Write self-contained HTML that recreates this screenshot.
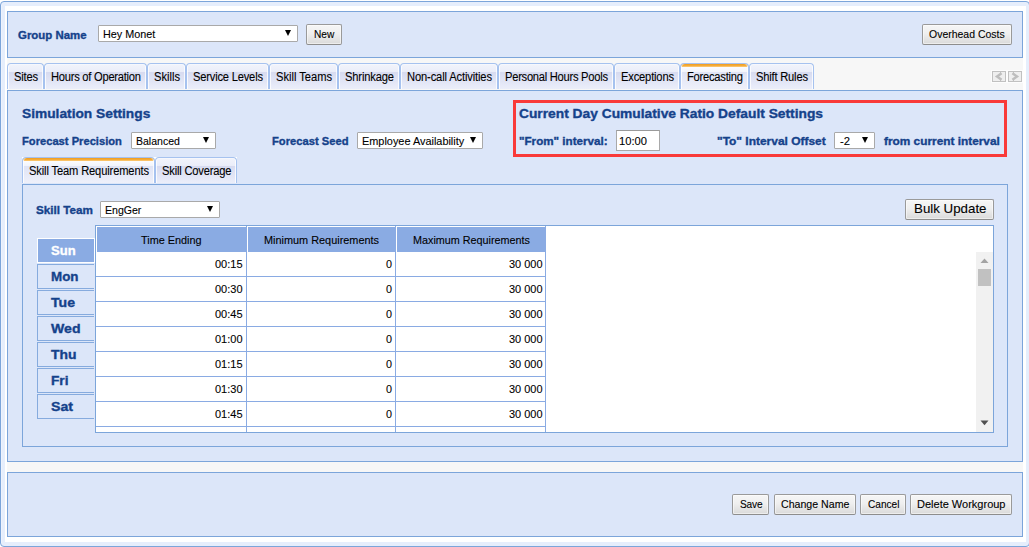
<!DOCTYPE html>
<html lang="en"><head><meta charset="utf-8"><title>Workgroup</title>
<style>
html,body{margin:0;padding:0;background:#fff;}
body{width:1029px;height:547px;overflow:hidden;position:relative;font-family:"Liberation Sans", sans-serif;}
div,span{box-sizing:border-box;}
.a{position:absolute;}
.t{position:absolute;white-space:nowrap;line-height:20px;}
.pnl{position:absolute;border:1px solid #7ca5da;background:#dce6f9;}
.btn{position:absolute;border:1px solid #9a9a9a;border-bottom-color:#8d8d8d;border-radius:2px;background:linear-gradient(#f6f6f6,#efefef 45%,#dadada);box-shadow:inset 0 0 0 1px rgba(255,255,255,.5);}
.sel{position:absolute;border:1px solid #a9a9a9;background:#fff;border-radius:1px;}
.arr{position:absolute;width:0;height:0;border-left:3.5px solid transparent;border-right:3.5px solid transparent;border-top:6px solid #000;}
.tab{position:absolute;height:26px;border:1px solid #a6c2ef;border-bottom:none;border-radius:4px 4px 0 0;
 background:linear-gradient(#fbfcff 0,#f1f3fb 1px,#eaedf9 8px,#d7dbf0 8.5px,#ebeefa 100%);box-shadow:inset 1px 0 0 rgba(255,255,255,.8),inset -1px 0 0 rgba(255,255,255,.8);}
.tab.on{background:linear-gradient(#f1a127 0,#f1a127 1px,#f8b546 2px,#fccf86 3px,#fafbfe 3.5px,#f2f4fb 8px,#e0e4f5 8.5px,#eef0fa 100%);}
.day{position:absolute;left:37px;width:57px;height:25px;border:1px solid #86abde;border-right:none;background:#dce6f9;}
.day.on{background:#8aabe3;border:1px solid #fff;width:58px;}
.hl{position:absolute;height:1px;background:#8aabe3;}
.vl{position:absolute;width:1px;background:#8aabe3;}
</style></head><body>

<div class="a" style="left:0;top:1px;width:1030px;height:546px;border:1px solid #7ca5da;border-radius:4px;background:#e6eefc;box-shadow:inset 1px 0 0 #eef3fd;"></div>
<div class="a" style="left:5px;top:6px;width:1021px;height:536px;background:#fff;"></div>
<div class="a" style="left:7px;top:58px;width:1016px;height:414px;background:#f7f7f7;"></div>
<div class="pnl" style="left:7px;top:11px;width:1016px;height:47px;"></div>
<div class="pnl" style="left:7px;top:90px;width:1016px;height:372px;"></div>
<div class="pnl" style="left:7px;top:472px;width:1016px;height:65px;"></div>
<div class="pnl" style="left:22px;top:184px;width:986px;height:263px;"></div>
<div class="sel" style="left:98px;top:25px;width:200px;height:17px;"></div><div class="arr" style="left:285px;top:30px;"></div>
<div class="btn" style="left:306px;top:24px;width:36px;height:21px;"></div>
<div class="btn" style="left:922px;top:24px;width:90px;height:21px;"></div>
<div class="tab" style="left:7px;width:37px;top:63px;"></div>
<div class="tab" style="left:44px;width:103px;top:63px;"></div>
<div class="tab" style="left:147px;width:39px;top:63px;"></div>
<div class="tab" style="left:186px;width:83px;top:63px;"></div>
<div class="tab" style="left:269px;width:69px;top:63px;"></div>
<div class="tab" style="left:338px;width:62px;top:63px;"></div>
<div class="tab" style="left:400px;width:98px;top:63px;"></div>
<div class="tab" style="left:498px;width:116px;top:63px;"></div>
<div class="tab" style="left:614px;width:66px;top:63px;"></div>
<div class="tab on" style="left:680px;width:69px;top:63px;"></div>
<div class="tab" style="left:749px;width:65px;top:63px;"></div>
<svg class="a" style="left:991px;top:70px;" width="16" height="13" viewBox="0 0 16 13"><rect x="0" y="0" width="16" height="13" fill="#fdfdfd"/><rect x="1.5" y="1.5" width="13" height="10" fill="#efefef" stroke="#c1c1c1"/><polyline points="10.6,3.3 6.0,6.5 10.6,9.7" fill="none" stroke="#bebebe" stroke-width="2.4"/><rect x="9" y="2" width="1" height="1.6" fill="#c1c1c1"/><rect x="9" y="9.4" width="1" height="1.6" fill="#c1c1c1"/></svg>
<svg class="a" style="left:1007px;top:70px;" width="16" height="13" viewBox="0 0 16 13"><rect x="0" y="0" width="16" height="13" fill="#fdfdfd"/><rect x="1.5" y="1.5" width="13" height="10" fill="#efefef" stroke="#c1c1c1"/><polyline points="5.4,3.3 10.0,6.5 5.4,9.7" fill="none" stroke="#bebebe" stroke-width="2.4"/><rect x="6" y="2" width="1" height="1.6" fill="#c1c1c1"/><rect x="6" y="9.4" width="1" height="1.6" fill="#c1c1c1"/></svg>
<div class="sel" style="left:131px;top:132px;width:85px;height:17px;"></div><div class="arr" style="left:203px;top:137px;"></div>
<div class="sel" style="left:357px;top:132px;width:126px;height:17px;"></div><div class="arr" style="left:470px;top:137px;"></div>
<div class="a" style="left:513px;top:100px;width:494px;height:57px;border:3px solid #f93a3a;"></div>
<div class="a" style="left:616px;top:130px;width:44px;height:21px;border:1px solid #a9a9a9;border-top-color:#9a9a9a;background:#fff;"></div>
<div class="sel" style="left:834px;top:132px;width:41px;height:17px;"></div><div class="arr" style="left:862px;top:137px;"></div>
<div class="a" style="left:22px;top:157px;width:215px;height:4px;background:#fff;"></div>
<div class="a" style="left:25px;top:157px;width:209px;height:4px;background:#dce6f9;"></div>
<div class="a" style="left:151px;top:157px;width:8px;height:4px;background:#fff;"></div>
<div class="tab on" style="left:22px;width:133px;top:157px;"></div>
<div class="tab" style="left:155px;width:82px;top:157px;"></div>
<div class="sel" style="left:100px;top:201px;width:120px;height:17px;"></div><div class="arr" style="left:207px;top:206px;"></div>
<div class="btn" style="left:905px;top:199px;width:89px;height:21px;"></div>
<div class="a" style="left:95px;top:225px;width:899px;height:208px;border:1px solid #7ca5da;background:#fff;"></div>
<div class="a" style="left:97px;top:227px;width:149px;height:25px;background:#8aabe3;"></div>
<div class="vl" style="left:246px;top:226px;height:206px;"></div>
<div class="a" style="left:248px;top:227px;width:147px;height:25px;background:#8aabe3;"></div>
<div class="vl" style="left:395px;top:226px;height:206px;"></div>
<div class="a" style="left:397px;top:227px;width:148px;height:25px;background:#8aabe3;"></div>
<div class="vl" style="left:545px;top:226px;height:206px;"></div>
<div class="hl" style="left:96px;top:276px;width:450px;"></div>
<div class="hl" style="left:96px;top:301px;width:450px;"></div>
<div class="hl" style="left:96px;top:326px;width:450px;"></div>
<div class="hl" style="left:96px;top:351px;width:450px;"></div>
<div class="hl" style="left:96px;top:376px;width:450px;"></div>
<div class="hl" style="left:96px;top:401px;width:450px;"></div>
<div class="hl" style="left:96px;top:426px;width:450px;"></div>
<div class="a" style="left:976px;top:252px;width:17px;height:180px;background:#f1f1f1;"></div>
<div class="a" style="left:978px;top:269px;width:13px;height:17px;background:#c1c1c1;"></div>
<svg class="a" style="left:976px;top:252px;" width="17" height="17"><polygon points="4.5,11 8.5,6.6 12.5,11" fill="#a3a3a3"/></svg>
<svg class="a" style="left:976px;top:415px;" width="17" height="17"><polygon points="4.5,5.5 12.5,5.5 8.5,10.2" fill="#505050"/></svg>
<div class="day on" style="top:238px;"></div>
<div class="day" style="top:264px;"></div>
<div class="day" style="top:290px;"></div>
<div class="day" style="top:316px;"></div>
<div class="day" style="top:342px;"></div>
<div class="day" style="top:368px;"></div>
<div class="day" style="top:394px;"></div>
<div class="btn" style="left:732px;top:494px;width:37px;height:21px;"></div>
<div class="btn" style="left:774px;top:494px;width:82px;height:21px;"></div>
<div class="btn" style="left:860px;top:494px;width:46px;height:21px;"></div>
<div class="btn" style="left:910px;top:494px;width:102px;height:21px;"></div>
<span class="t" style="left:18.40px;top:24.72px;font-size:11.20px;color:#15428b;font-weight:bold;transform-origin:0 0;transform:scaleX(1.0217);-webkit-text-stroke:0.35px #15428b;">Group Name</span>
<span class="t" style="left:102.70px;top:24.19px;font-size:11.00px;color:#000;transform-origin:0 0;transform:scaleX(0.9830);letter-spacing:0.000px;-webkit-text-stroke:0.1px #000;">Hey Monet</span>
<span class="t" style="left:314.00px;top:24.19px;font-size:11.00px;color:#000;transform-origin:0 0;transform:scaleX(0.9221);letter-spacing:0.000px;-webkit-text-stroke:0.1px #000;">New</span>
<span class="t" style="left:929.30px;top:24.19px;font-size:11.00px;color:#000;transform-origin:0 0;transform:scaleX(0.9524);letter-spacing:0.000px;-webkit-text-stroke:0.1px #000;">Overhead Costs</span>
<span class="t" style="left:13.90px;top:66.54px;font-size:12.00px;color:#000;transform-origin:0 0;transform:scaleX(0.9300);letter-spacing:-0.220px;-webkit-text-stroke:0.1px #000;">Sites</span>
<span class="t" style="left:50.90px;top:66.54px;font-size:12.00px;color:#000;transform-origin:0 0;transform:scaleX(0.9300);letter-spacing:-0.272px;-webkit-text-stroke:0.1px #000;">Hours of Operation</span>
<span class="t" style="left:153.90px;top:66.54px;font-size:12.00px;color:#000;transform-origin:0 0;transform:scaleX(0.9300);letter-spacing:-0.012px;-webkit-text-stroke:0.1px #000;">Skills</span>
<span class="t" style="left:192.90px;top:66.54px;font-size:12.00px;color:#000;transform-origin:0 0;transform:scaleX(0.9300);letter-spacing:-0.214px;-webkit-text-stroke:0.1px #000;">Service Levels</span>
<span class="t" style="left:275.90px;top:66.54px;font-size:12.00px;color:#000;transform-origin:0 0;transform:scaleX(0.9300);letter-spacing:-0.025px;-webkit-text-stroke:0.1px #000;">Skill Teams</span>
<span class="t" style="left:344.90px;top:66.54px;font-size:12.00px;color:#000;transform-origin:0 0;transform:scaleX(0.9300);letter-spacing:-0.170px;-webkit-text-stroke:0.1px #000;">Shrinkage</span>
<span class="t" style="left:406.90px;top:66.54px;font-size:12.00px;color:#000;transform-origin:0 0;transform:scaleX(0.9300);letter-spacing:-0.146px;-webkit-text-stroke:0.1px #000;">Non-call Activities</span>
<span class="t" style="left:504.90px;top:66.54px;font-size:12.00px;color:#000;transform-origin:0 0;transform:scaleX(0.9300);letter-spacing:-0.279px;-webkit-text-stroke:0.1px #000;">Personal Hours Pools</span>
<span class="t" style="left:620.90px;top:66.54px;font-size:12.00px;color:#000;transform-origin:0 0;transform:scaleX(0.9300);letter-spacing:-0.190px;-webkit-text-stroke:0.1px #000;">Exceptions</span>
<span class="t" style="left:686.90px;top:66.54px;font-size:12.00px;color:#000;transform-origin:0 0;transform:scaleX(0.9300);letter-spacing:-0.249px;-webkit-text-stroke:0.1px #000;">Forecasting</span>
<span class="t" style="left:755.90px;top:66.54px;font-size:12.00px;color:#000;transform-origin:0 0;transform:scaleX(0.9300);letter-spacing:-0.212px;-webkit-text-stroke:0.1px #000;">Shift Rules</span>
<span class="t" style="left:22.00px;top:104.33px;font-size:13.20px;color:#15428b;font-weight:bold;transform-origin:0 0;transform:scaleX(1.0423);-webkit-text-stroke:0.35px #15428b;">Simulation Settings</span>
<span class="t" style="left:22.10px;top:131.12px;font-size:11.20px;color:#15428b;font-weight:bold;transform-origin:0 0;transform:scaleX(0.9979);-webkit-text-stroke:0.35px #15428b;">Forecast Precision</span>
<span class="t" style="left:135.60px;top:131.19px;font-size:11.00px;color:#000;transform-origin:0 0;transform:scaleX(0.9569);letter-spacing:0.000px;-webkit-text-stroke:0.1px #000;">Balanced</span>
<span class="t" style="left:271.50px;top:131.12px;font-size:11.20px;color:#15428b;font-weight:bold;transform-origin:0 0;transform:scaleX(1.0002);-webkit-text-stroke:0.35px #15428b;">Forecast Seed</span>
<span class="t" style="left:361.60px;top:131.19px;font-size:11.00px;color:#000;transform-origin:0 0;transform:scaleX(0.9909);letter-spacing:0.000px;-webkit-text-stroke:0.1px #000;">Employee Availability</span>
<span class="t" style="left:519.20px;top:104.33px;font-size:13.20px;color:#15428b;font-weight:bold;transform-origin:0 0;transform:scaleX(1.0450);-webkit-text-stroke:0.35px #15428b;">Current Day Cumulative Ratio Default Settings</span>
<span class="t" style="left:519.00px;top:130.82px;font-size:11.20px;color:#15428b;font-weight:bold;transform-origin:0 0;transform:scaleX(1.0397);-webkit-text-stroke:0.35px #15428b;">&quot;From&quot; interval:</span>
<span class="t" style="left:618.60px;top:131.19px;font-size:11.00px;color:#000;transform-origin:0 0;transform:scaleX(1.0134);letter-spacing:-0.000px;-webkit-text-stroke:0.1px #000;">10:00</span>
<span class="t" style="left:717.10px;top:130.82px;font-size:11.20px;color:#15428b;font-weight:bold;transform-origin:0 0;transform:scaleX(1.0680);-webkit-text-stroke:0.35px #15428b;">&quot;To&quot; Interval Offset</span>
<span class="t" style="left:840.00px;top:131.19px;font-size:11.00px;color:#000;transform-origin:0 0;transform:scaleX(1.0224);letter-spacing:0.000px;-webkit-text-stroke:0.1px #000;">-2</span>
<span class="t" style="left:884.00px;top:130.82px;font-size:11.20px;color:#15428b;font-weight:bold;transform-origin:0 0;transform:scaleX(1.0583);-webkit-text-stroke:0.35px #15428b;">from current interval</span>
<span class="t" style="left:29.00px;top:160.54px;font-size:12.00px;color:#000;transform-origin:0 0;transform:scaleX(0.9300);letter-spacing:-0.158px;-webkit-text-stroke:0.1px #000;">Skill Team Requirements</span>
<span class="t" style="left:162.00px;top:160.54px;font-size:12.00px;color:#000;transform-origin:0 0;transform:scaleX(0.9300);letter-spacing:-0.203px;-webkit-text-stroke:0.1px #000;">Skill Coverage</span>
<span class="t" style="left:35.90px;top:200.12px;font-size:11.20px;color:#15428b;font-weight:bold;transform-origin:0 0;transform:scaleX(1.0437);-webkit-text-stroke:0.35px #15428b;">Skill Team</span>
<span class="t" style="left:104.60px;top:200.19px;font-size:11.00px;color:#000;transform-origin:0 0;transform:scaleX(0.9599);letter-spacing:0.000px;-webkit-text-stroke:0.1px #000;">EngGer</span>
<span class="t" style="left:913.50px;top:199.08px;font-size:13.33px;color:#000;transform-origin:0 0;transform:scaleX(0.9985);letter-spacing:0.000px;-webkit-text-stroke:0.1px #000;">Bulk Update</span>
<span class="t" style="left:51.40px;top:241.43px;font-size:13.20px;color:#fff;font-weight:bold;transform-origin:0 0;transform:scaleX(0.9871);-webkit-text-stroke:0.35px #fff;">Sun</span>
<span class="t" style="left:51.40px;top:267.43px;font-size:13.20px;color:#15428b;font-weight:bold;transform-origin:0 0;transform:scaleX(1.0144);-webkit-text-stroke:0.35px #15428b;">Mon</span>
<span class="t" style="left:51.40px;top:293.43px;font-size:13.20px;color:#15428b;font-weight:bold;transform-origin:0 0;transform:scaleX(1.0682);-webkit-text-stroke:0.35px #15428b;">Tue</span>
<span class="t" style="left:51.40px;top:319.43px;font-size:13.20px;color:#15428b;font-weight:bold;transform-origin:0 0;transform:scaleX(1.0685);-webkit-text-stroke:0.35px #15428b;">Wed</span>
<span class="t" style="left:51.40px;top:345.43px;font-size:13.20px;color:#15428b;font-weight:bold;transform-origin:0 0;transform:scaleX(1.0549);-webkit-text-stroke:0.35px #15428b;">Thu</span>
<span class="t" style="left:51.40px;top:371.43px;font-size:13.20px;color:#15428b;font-weight:bold;transform-origin:0 0;transform:scaleX(1.0380);-webkit-text-stroke:0.35px #15428b;">Fri</span>
<span class="t" style="left:51.40px;top:397.43px;font-size:13.20px;color:#15428b;font-weight:bold;transform-origin:0 0;transform:scaleX(1.0715);-webkit-text-stroke:0.35px #15428b;">Sat</span>
<span class="t" style="left:141.00px;top:230.19px;font-size:11.00px;color:#000;transform-origin:0 0;transform:scaleX(0.9862);letter-spacing:0.000px;-webkit-text-stroke:0.1px #000;">Time Ending</span>
<span class="t" style="left:263.50px;top:230.19px;font-size:11.00px;color:#000;transform-origin:0 0;transform:scaleX(0.9900);letter-spacing:0.000px;-webkit-text-stroke:0.1px #000;">Minimum Requirements</span>
<span class="t" style="left:412.50px;top:230.19px;font-size:11.00px;color:#000;transform-origin:0 0;transform:scaleX(0.9815);letter-spacing:0.000px;-webkit-text-stroke:0.1px #000;">Maximum Requirements</span>
<span class="t" style="left:214.50px;top:254.19px;font-size:11.00px;color:#000;transform-origin:0 0;transform:scaleX(0.9989);letter-spacing:0.000px;-webkit-text-stroke:0.1px #000;">00:15</span>
<span class="t" style="left:386.00px;top:254.19px;font-size:11.00px;color:#000;transform-origin:0 0;transform:scaleX(0.9796);letter-spacing:0.000px;-webkit-text-stroke:0.1px #000;">0</span>
<span class="t" style="left:508.50px;top:254.19px;font-size:11.00px;color:#000;transform-origin:0 0;transform:scaleX(0.9954);letter-spacing:0.000px;-webkit-text-stroke:0.1px #000;">30 000</span>
<span class="t" style="left:214.50px;top:279.19px;font-size:11.00px;color:#000;transform-origin:0 0;transform:scaleX(0.9989);letter-spacing:0.000px;-webkit-text-stroke:0.1px #000;">00:30</span>
<span class="t" style="left:386.00px;top:279.19px;font-size:11.00px;color:#000;transform-origin:0 0;transform:scaleX(0.9796);letter-spacing:0.000px;-webkit-text-stroke:0.1px #000;">0</span>
<span class="t" style="left:508.50px;top:279.19px;font-size:11.00px;color:#000;transform-origin:0 0;transform:scaleX(0.9954);letter-spacing:0.000px;-webkit-text-stroke:0.1px #000;">30 000</span>
<span class="t" style="left:214.50px;top:304.19px;font-size:11.00px;color:#000;transform-origin:0 0;transform:scaleX(0.9989);letter-spacing:0.000px;-webkit-text-stroke:0.1px #000;">00:45</span>
<span class="t" style="left:386.00px;top:304.19px;font-size:11.00px;color:#000;transform-origin:0 0;transform:scaleX(0.9796);letter-spacing:0.000px;-webkit-text-stroke:0.1px #000;">0</span>
<span class="t" style="left:508.50px;top:304.19px;font-size:11.00px;color:#000;transform-origin:0 0;transform:scaleX(0.9954);letter-spacing:0.000px;-webkit-text-stroke:0.1px #000;">30 000</span>
<span class="t" style="left:214.50px;top:329.19px;font-size:11.00px;color:#000;transform-origin:0 0;transform:scaleX(0.9989);letter-spacing:0.000px;-webkit-text-stroke:0.1px #000;">01:00</span>
<span class="t" style="left:386.00px;top:329.19px;font-size:11.00px;color:#000;transform-origin:0 0;transform:scaleX(0.9796);letter-spacing:0.000px;-webkit-text-stroke:0.1px #000;">0</span>
<span class="t" style="left:508.50px;top:329.19px;font-size:11.00px;color:#000;transform-origin:0 0;transform:scaleX(0.9954);letter-spacing:0.000px;-webkit-text-stroke:0.1px #000;">30 000</span>
<span class="t" style="left:214.50px;top:354.19px;font-size:11.00px;color:#000;transform-origin:0 0;transform:scaleX(0.9989);letter-spacing:0.000px;-webkit-text-stroke:0.1px #000;">01:15</span>
<span class="t" style="left:386.00px;top:354.19px;font-size:11.00px;color:#000;transform-origin:0 0;transform:scaleX(0.9796);letter-spacing:0.000px;-webkit-text-stroke:0.1px #000;">0</span>
<span class="t" style="left:508.50px;top:354.19px;font-size:11.00px;color:#000;transform-origin:0 0;transform:scaleX(0.9954);letter-spacing:0.000px;-webkit-text-stroke:0.1px #000;">30 000</span>
<span class="t" style="left:214.50px;top:379.19px;font-size:11.00px;color:#000;transform-origin:0 0;transform:scaleX(0.9989);letter-spacing:0.000px;-webkit-text-stroke:0.1px #000;">01:30</span>
<span class="t" style="left:386.00px;top:379.19px;font-size:11.00px;color:#000;transform-origin:0 0;transform:scaleX(0.9796);letter-spacing:0.000px;-webkit-text-stroke:0.1px #000;">0</span>
<span class="t" style="left:508.50px;top:379.19px;font-size:11.00px;color:#000;transform-origin:0 0;transform:scaleX(0.9954);letter-spacing:0.000px;-webkit-text-stroke:0.1px #000;">30 000</span>
<span class="t" style="left:214.50px;top:404.19px;font-size:11.00px;color:#000;transform-origin:0 0;transform:scaleX(0.9989);letter-spacing:0.000px;-webkit-text-stroke:0.1px #000;">01:45</span>
<span class="t" style="left:386.00px;top:404.19px;font-size:11.00px;color:#000;transform-origin:0 0;transform:scaleX(0.9796);letter-spacing:0.000px;-webkit-text-stroke:0.1px #000;">0</span>
<span class="t" style="left:508.50px;top:404.19px;font-size:11.00px;color:#000;transform-origin:0 0;transform:scaleX(0.9954);letter-spacing:0.000px;-webkit-text-stroke:0.1px #000;">30 000</span>
<span class="t" style="left:739.60px;top:494.19px;font-size:11.00px;color:#000;transform-origin:0 0;transform:scaleX(0.9200);letter-spacing:-0.171px;-webkit-text-stroke:0.1px #000;">Save</span>
<span class="t" style="left:780.60px;top:494.19px;font-size:11.00px;color:#000;transform-origin:0 0;transform:scaleX(0.9642);letter-spacing:0.000px;-webkit-text-stroke:0.1px #000;">Change Name</span>
<span class="t" style="left:867.50px;top:494.19px;font-size:11.00px;color:#000;transform-origin:0 0;transform:scaleX(0.9200);letter-spacing:-0.002px;-webkit-text-stroke:0.1px #000;">Cancel</span>
<span class="t" style="left:916.50px;top:494.19px;font-size:11.00px;color:#000;transform-origin:0 0;transform:scaleX(1.0005);letter-spacing:0.000px;-webkit-text-stroke:0.1px #000;">Delete Workgroup</span>
</body></html>
